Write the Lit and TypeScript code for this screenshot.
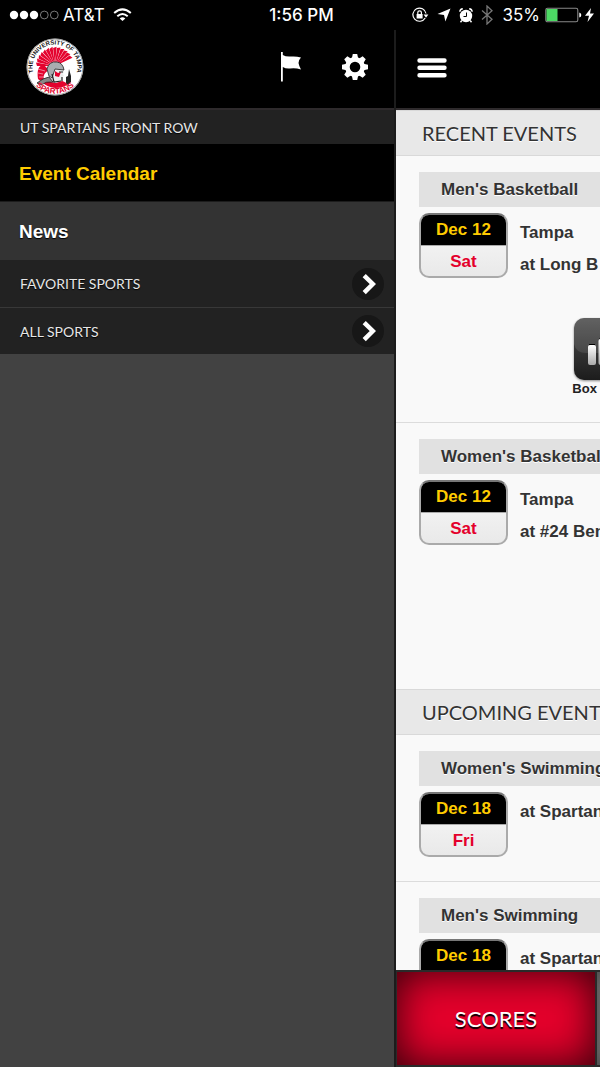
import { LitElement, html, css, svg, nothing } from "lit";
import { customElement, property } from "lit/decorators.js";

const crest = Array.from({ length: 13 }, (_, i) => {
  const a = ((180 + i * 12) * Math.PI) / 180;
  const b = a + 0.185;
  const p = (r: number, t: number) =>
    `${(29 + r * Math.cos(t)).toFixed(1)} ${(28 + r * Math.sin(t)).toFixed(1)}`;
  return svg`<path d="M${p(4, a)}L${p(18, a)}L${p(19.4, b)}L${p(4, b)}Z" fill="#e4032e"/>`;
});

const logo = html`<svg class="logo" viewBox="0 0 58 58" role="img" aria-label="University of Tampa Spartans">
  <defs>
    <path id="ring-top" d="M7.800 36.500A22.500 22.500 0 1 1 50.200 36.500" />
    <path id="ring-bottom" d="M3.500 37A26.700 26.700 0 0 0 54.500 37" />
  </defs>
  <circle cx="29" cy="29" r="28.500" fill="#fff" />
  <circle cx="29" cy="29" r="28" fill="none" stroke="#555" stroke-width=".6" />
  <g>${crest}</g>
  <path d="M18 27Q10 27 12 41Q15 44 18 41Q16 36 23 32Z" fill="#e4032e" />
  <path d="M12 31L19 33M12 35L17 36M13 39L17 39" stroke="#fff" stroke-width=".5" />
  <path d="M17 45Q29 37 42 46Q38 50 29 50Q21 49 17 45Z" fill="#e4032e" />
  <path d="M24 43L21 31Q23 23 31 24Q38 26 38 34L37 36L38 38L36 39V43L30 45L25 44Z" fill="#eee" />
  <path d="M21 31Q23 23 31 24Q37 25 38 32L29 31L26 40L23 38Z" fill="#a9adb0" stroke="#222" stroke-width=".8" />
  <path d="M29 33L32 35L35 34L33 39L29 38Z" fill="#e4032e" />
  <path d="M26 36L28 44L35 43M33 34H37M36 39V43" fill="none" stroke="#222" stroke-width="1.200" />
  <path d="M11 45Q17 40 23 39L27 44Q20 43 15 47Z" fill="#888" stroke="#222" stroke-width=".8" />
  <path d="M43 31L45 38V44L42 47L40 45V39L42 38Z" fill="#222" />
  <text class="ring"><textPath href="#ring-top" startOffset="50%" text-anchor="middle">THE UNIVERSITY OF TAMPA</textPath></text>
  <text class="ring ring-red"><textPath href="#ring-bottom" startOffset="50%" text-anchor="middle">SPARTANS</textPath></text>
</svg>`;

@customElement("status-bar")
class StatusBar extends LitElement {
  static styles = css`
    :host {
      display: grid;
      grid-template-columns: 1fr auto 1fr;
      align-items: center;
      height: 30px;
      padding: 0 6px 0 9px;
      background: #000;
      color: #fff;
      font: 17px/30px Inter, Roboto, sans-serif;
    }
    .side { display: flex; align-items: center; }
    .end { justify-content: flex-end; }
    .time { font-weight: 500; }
    .carrier { margin: 0 8px 0 4px; }
    .icon { display: block; flex: none; }
    .gap { margin-right: 8px; }
    .percent { margin: 0 5px 0 9px; }
    .bolt { margin-left: 3px; }
  `;
  render() {
    return html`
      <div class="side">
        <svg class="icon" width="50" height="12" viewBox="0 0 50 12" fill="#fff">
          <circle cx="5" cy="6" r="4.200" /><circle cx="15" cy="6" r="4.200" /><circle cx="25" cy="6" r="4.200" />
          <g fill="none" stroke="#aaa" stroke-width=".7"><circle cx="35.300" cy="6" r="3.900" /><circle cx="45.300" cy="6" r="3.900" /></g>
        </svg>
        <span class="carrier">AT&amp;T</span>
        <svg class="icon" width="19" height="14" viewBox="0 0 19 14" fill="none" stroke="#fff" stroke-width="2">
          <path d="M1.200 5Q9.500-2.200 17.800 5" /><path d="M4.300 8.300Q9.500 3.800 14.700 8.300" />
          <path d="M9.500 13L6.700 10.400Q9.500 8.300 12.300 10.400Z" fill="#fff" stroke="none" />
        </svg>
      </div>
      <span class="time">1:56 PM</span>
      <div class="side end">
        <svg class="icon gap" width="17" height="16" viewBox="0 0 17 16" fill="none" stroke="#fff" stroke-width="1.200">
          <path d="M13.200 11A6.600 6.600 0 1 1 14 6.500" /><path d="M11.600 7.500L16.400 7.500L14 10.800Z" fill="#fff" stroke="none" />
          <rect x="4.600" y="7" width="6" height="4.500" fill="#fff" stroke="none" /><path d="M5.800 7V5.600a1.800 1.800 0 0 1 3.600 0V7" />
        </svg>
        <svg class="icon gap" width="14" height="14" viewBox="0 0 14 14" fill="#fff"><path d="M13.500 .5L8.400 13.500L7 7L.5 6Z" /></svg>
        <svg class="icon gap" width="14" height="15" viewBox="0 0 14 15">
          <circle cx="7" cy="8" r="6.200" fill="#fff" /><path d="M.8 3.800Q1 1 3.800 .8M13.200 3.800Q13 1 10.200 .8M2.800 12.500L1.500 14.200M11.200 12.500L12.500 14.200" fill="none" stroke="#fff" stroke-width="1.400" />
          <path d="M7.500 4.500V8.500H4.500" fill="none" stroke="#000" />
        </svg>
        <svg class="icon" width="12" height="20" viewBox="0 0 12 20" fill="none" stroke="#777" stroke-width="1.300"><path d="M1 5.500L11 14.300L6 19V1L11 5.700L1 14.500" /></svg>
        <span class="percent">35%</span>
        <svg class="icon" width="37" height="16" viewBox="0 0 37 16">
          <rect x=".8" y="1.200" width="32" height="13.600" rx="1.800" fill="none" stroke="#888" stroke-width="1.100" />
          <rect x="1.500" y="2" width="11" height="12" fill="#4cd964" /><path d="M34.300 5.500Q36.300 6 36.300 8T34.300 10.500Z" fill="#fff" />
        </svg>
        <svg class="icon bolt" width="9" height="14" viewBox="0 0 9 14" fill="#fff"><path d="M6 0L0 7.800H4L2.500 14L9 5.600H5Z" /></svg>
      </div>
    `;
  }
}

@customElement("nav-drawer")
class NavDrawer extends LitElement {
  static styles = css`
    :host {
      display: flex;
      flex-direction: column;
      box-sizing: border-box;
      background: #424242;
      border-right: 2px solid #1c1c1c;
      font-family: "Liberation Sans", Arial, sans-serif;
    }
    .header {
      display: flex;
      align-items: center;
      box-sizing: border-box;
      height: 80px;
      padding: 0 19px 4px 26px;
      background: #000;
      border-bottom: 2px solid #2e2a2c;
    }
    .logo { width: 58px; height: 58px; margin-right: auto; }
    .ring { font: bold 6px "Liberation Sans", Arial, sans-serif; fill: #111; }
    .ring-red { font-size: 8px; fill: #e4032e; }
    button { border: 0; background: none; padding: 0; font: inherit; color: inherit; cursor: pointer; }
    .tool { display: grid; place-items: center; width: 40px; height: 44px; margin-left: 24px; }
    .caption, .group {
      display: flex;
      align-items: center;
      justify-content: space-between;
      box-sizing: border-box;
      width: 100%;
      background: #222;
      color: #e6e6e6;
      font-family: Lato, "Liberation Sans", sans-serif;
      font-size: 14px;
      font-weight: 400;
      text-shadow: 0 1px 1px #000;
    }
    .caption { height: 34px; margin: 0; padding-left: 20px; }
    .group { height: 47px; padding: 0 10px 0 20px; }
    .group + .group { border-top: 1px solid #383838; }
    .link {
      display: flex;
      align-items: center;
      box-sizing: border-box;
      height: 58px;
      padding: 2px 0 0 19px;
      background: #333;
      color: #fff;
      font-size: 19px;
      font-weight: 700;
      text-decoration: none;
      text-shadow: 0 1px 1px #000;
    }
    .current { background: #000; color: #fc0; border-bottom: 1px solid #1c1c1c; }
  `;
  private group(label: string) {
    return html`<button class="group">
      <span>${label}</span>
      <svg width="32" height="32" viewBox="0 0 32 32"><circle cx="16" cy="16" r="16" fill="#171717" /><path d="M12.200 7.600L20.800 16L12.200 24.600" fill="none" stroke="#fff" stroke-width="4.500" /></svg>
    </button>`;
  }
  render() {
    return html`
      <header class="header">
        ${logo}
        <button class="tool" aria-label="Flag">
          <svg width="22" height="30" viewBox="0 0 22 30" fill="#fff"><path d="M1 0H2.800V3Q6 5 11 4.500Q16 4 21 5.500Q18.500 8 18.500 11Q19 14 21 17.500Q15 15.500 10 16.500Q6 17 2.800 15V29.500H1Z" /></svg>
        </button>
        <button class="tool" aria-label="Settings">
          <svg width="26" height="26" viewBox="-13 -13 26 26" fill="#fff">
            <circle r="7.600" fill="none" stroke="#fff" stroke-width="4.600" />
            ${[0, 45, 90, 135, 180, 225, 270, 315].map(
              (a) => svg`<path transform="rotate(${a})" d="M-3.200-8.500L-2.200-13H2.200L3.200-8.500Z"/>`
            )}
          </svg>
        </button>
      </header>
      <h2 class="caption">UT SPARTANS FRONT ROW</h2>
      <a class="link current" href="#calendar">Event Calendar</a>
      <a class="link" href="#news">News</a>
      ${this.group("FAVORITE SPORTS")} ${this.group("ALL SPORTS")}
    `;
  }
}

interface GameEvent {
  sport: string;
  date: string;
  day: string;
  teams: string[];
  boxScore?: boolean;
}

@customElement("event-card")
class EventCard extends LitElement {
  @property({ attribute: false }) event!: GameEvent;
  @property({ type: Boolean }) past = false;
  static styles = css`
    :host {
      display: block;
      padding: 16px 23px 24px;
      color: #333;
      font: bold 17px/32px "Liberation Sans", Arial, sans-serif;
    }
    .sport {
      margin: 0 0 6px;
      padding-left: 22px;
      background: #e1e1e1;
      font-size: 17px;
      line-height: 35px;
      white-space: nowrap;
      text-shadow: 0 1px 0 #fff;
    }
    .row { display: flex; align-items: flex-start; gap: 12px; }
    .badge {
      box-sizing: border-box;
      width: 89px;
      height: 65px;
      border: 2px solid #aaa;
      border-top-color: #777;
      border-radius: 10px;
      overflow: hidden;
      text-align: center;
      background: linear-gradient(#fafafa, #e9e9e9);
    }
    .date { display: block; background: #000; color: #fc0; line-height: 30px; border-bottom: 1px solid #aaa; }
    .day { display: block; color: #e4002b; line-height: 32px; }
    .teams { padding-top: 4px; }
    .team { display: block; }
    .actions { display: flex; min-height: 80px; padding: 37px 0 0 148px; }
    .box {
      display: flex;
      flex-direction: column;
      align-items: center;
      width: 75px;
      padding: 0;
      border: 0;
      background: none;
      color: #222;
      font: bold 13px/18px "Liberation Sans", Arial, sans-serif;
      cursor: pointer;
    }
    .chart { display: block; filter: drop-shadow(0 1px 1px #888); }
  `;
  render() {
    const e = this.event;
    return html`
      <h3 class="sport">${e.sport}</h3>
      <div class="row">
        <time class="badge"><span class="date">${e.date}</span><span class="day">${e.day}</span></time>
        <div class="teams">${e.teams.map((t) => html`<span class="team">${t}</span>`)}</div>
      </div>
      ${this.past
        ? html`<div class="actions">
            ${e.boxScore
              ? html`<button class="box">
                  <svg class="chart" width="62" height="62" viewBox="0 0 62 62">
                    <defs>
                      <linearGradient id="face" x2="0" y2="1"><stop stop-color="#505050" /><stop offset="1" stop-color="#1c1c1c" /></linearGradient>
                      <linearGradient id="bar" x2="0" y2="1"><stop stop-color="#fff" /><stop offset="1" stop-color="#aaa" /></linearGradient>
                    </defs>
                    <rect width="62" height="62" rx="10" fill="url(#face)" />
                    <path d="M0 26V10Q0 0 10 0H52Q62 0 62 10V26Q60 35 50 35H12Q2 35 0 26Z" fill="#fff" fill-opacity=".1" />
                    <g fill="url(#bar)"><rect x="14" y="27" width="8" height="20" rx="2" /><rect x="24.500" y="21" width="8" height="26" rx="2" /><rect x="36" y="14" width="8" height="33" rx="2" /></g>
                    <path d="M15 26.500H21M25.500 20.500H31.500" stroke="#000" />
                  </svg>
                  <span>Box Score</span>
                </button>`
              : nothing}
          </div>`
        : nothing}
    `;
  }
}

const recent: GameEvent[] = [
  { sport: "Men's Basketball", date: "Dec 12", day: "Sat", teams: ["Tampa", "at Long B"], boxScore: true },
  { sport: "Women's Basketball", date: "Dec 12", day: "Sat", teams: ["Tampa", "at #24 Bentley"] },
];
const upcoming: GameEvent[] = [
  { sport: "Women's Swimming", date: "Dec 18", day: "Fri", teams: ["at Spartan"] },
  { sport: "Men's Swimming", date: "Dec 18", day: "Fri", teams: ["at Spartan"] },
];

@customElement("calendar-page")
class CalendarPage extends LitElement {
  static styles = css`
    :host { display: flex; flex-direction: column; background: #f9f9f9; }
    .header {
      display: flex;
      align-items: center;
      flex: none;
      box-sizing: border-box;
      height: 80px;
      padding: 0 20px 2px;
      background: #000;
      border-bottom: 2px solid #2e2a2c;
    }
    .menu { display: grid; place-items: center; width: 32px; height: 44px; padding: 0; border: 0; background: none; cursor: pointer; }
    .list { flex: 1; min-height: 0; overflow: hidden; }
    .title {
      margin: 0;
      padding-left: 26px;
      border: solid #d9d9d9;
      border-width: 1px 0;
      background: #e8e8e8;
      color: #333;
      font: 20px/44px Lato, "Liberation Sans", sans-serif;
      text-shadow: 0 1px 0 #fff;
    }
    .event + .event { border-top: 1px solid #dcdcdc; }
    .tabs {
      display: grid;
      grid-template-columns: repeat(3, 1fr);
      gap: 2px;
      flex: none;
      box-sizing: border-box;
      height: 97px;
      padding: 2px 1px;
      background: #2a2a2a;
    }
    .tab {
      border: 0;
      padding: 0;
      background: #777;
      box-shadow: inset 0 0 20px #444;
      color: #fff;
      font: 22px Lato, "Liberation Sans", sans-serif;
      text-shadow: 0 2px 1px #000;
      cursor: pointer;
    }
    .active { background: #e4002b; box-shadow: inset 0 0 40px rgba(0, 0, 0, 0.8); }
  `;
  private section(title: string, events: GameEvent[], past: boolean) {
    return html`<section>
      <h2 class="title">${title}</h2>
      ${events.map((e) => html`<event-card class="event" .event=${e} ?past=${past}></event-card>`)}
    </section>`;
  }
  render() {
    return html`
      <header class="header">
        <button class="menu" aria-label="Menu">
          <svg width="30" height="20" viewBox="0 0 30 20" stroke="#fff" stroke-width="4.400" stroke-linecap="round"><path d="M2.500 2.500H27.500M2.500 9.800H27.500M2.500 17.200H27.500" /></svg>
        </button>
      </header>
      <main class="list">${this.section("RECENT EVENTS", recent, true)} ${this.section("UPCOMING EVENTS", upcoming, false)}</main>
      <nav class="tabs">
        <button class="tab active">SCORES</button>
        <button class="tab" aria-label="News"></button>
        <button class="tab" aria-label="More"></button>
      </nav>
    `;
  }
}

@customElement("app-root")
class AppRoot extends LitElement {
  static styles = css`
    :host { display: flex; flex-direction: column; height: 100vh; overflow: hidden; background: #000; }
    .status { flex: none; }
    .panes { display: flex; flex: 1; min-height: 0; overflow: hidden; }
    .drawer { flex: 0 0 66%; }
    .page { flex: 0 0 100%; min-width: 0; }
  `;
  render() {
    return html`
      <status-bar class="status"></status-bar>
      <div class="panes">
        <nav-drawer class="drawer"></nav-drawer>
        <calendar-page class="page"></calendar-page>
      </div>
    `;
  }
}
